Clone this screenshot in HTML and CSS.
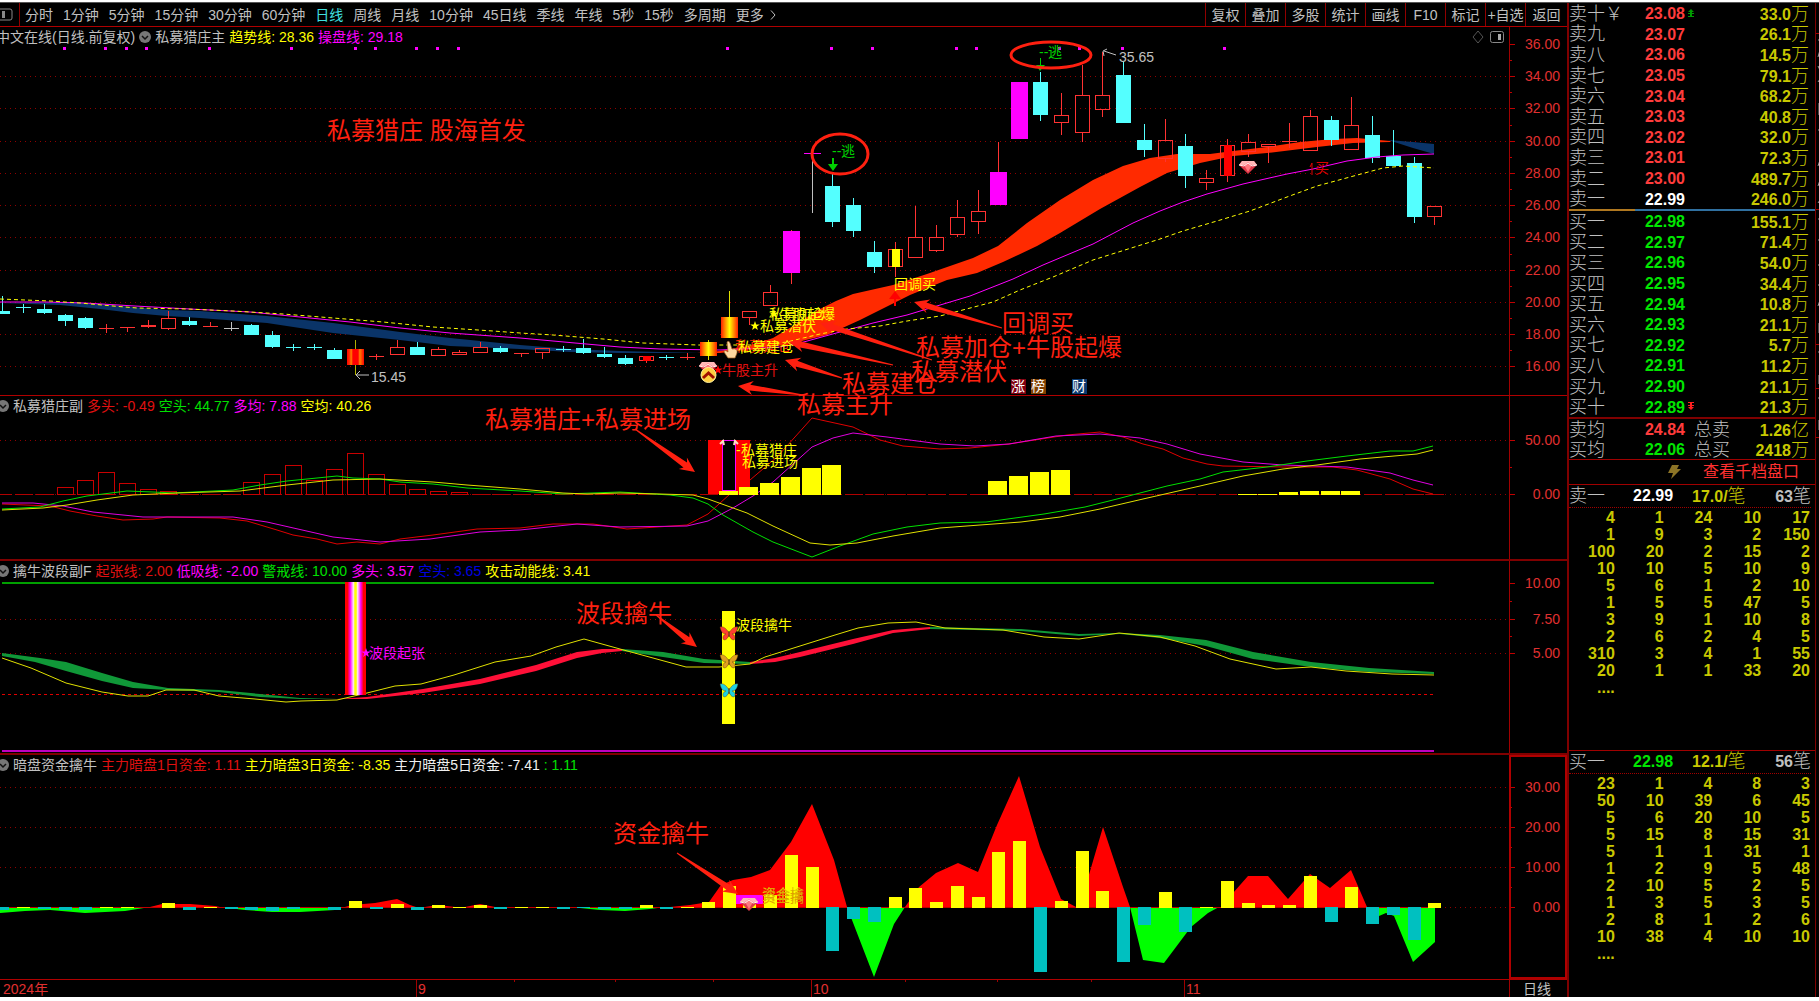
FILE: index.html
```html
<!DOCTYPE html>
<html lang="zh-CN">
<head>
<meta charset="utf-8">
<title>中文在线 日线</title>
<meta name="viewport" content="width=device-width, initial-scale=1.0">
<link rel="stylesheet" href="styles.css">
</head>
<body>

<div class="app">
<main class="left">

<nav class="toolbar">
<button class="side-toggle" aria-label="侧栏"><svg width="13" height="13" viewBox="0 0 13 13"><rect x="-3" y="1" width="15" height="11" rx="2" fill="none" stroke="#888"/><rect x="2" y="3" width="3" height="7" fill="#888"/></svg></button>
<div class="periods">
<button>分时</button>
<button>1分钟</button>
<button>5分钟</button>
<button>15分钟</button>
<button>30分钟</button>
<button>60分钟</button>
<button class="active">日线</button>
<button>周线</button>
<button>月线</button>
<button>10分钟</button>
<button>45日线</button>
<button>季线</button>
<button>年线</button>
<button>5秒</button>
<button>15秒</button>
<button>多周期</button>
<button class="more">更多<svg width="6" height="10" viewBox="0 0 6 10"><path d="M1 0.5L5 5L1 9.5" fill="none" stroke="#c0c0c0"/></svg></button>
</div>
<div class="tools">
<button>复权</button>
<button>叠加</button>
<button>多股</button>
<button>统计</button>
<button>画线</button>
<button>F10</button>
<button>标记</button>
<button>+自选</button>
<button>返回</button>
</div>
</nav>

<div class="charts">

<section class="panel panel-main">
<svg id="mainChart" class="plot" viewBox="0 27 1567 368" preserveAspectRatio="xMinYMin meet"></svg>
<div class="legend">
<span class="first">中文在线(日线.前复权)</span>
<svg class="chev" width="12" height="12" viewBox="0 0 12 12"><circle cx="6" cy="6" r="6" fill="#777"/><path d="M3 5L6 8L9 5" fill="none" stroke="#111" stroke-width="1.5"/></svg>
<span>私募猎庄主</span>
<span class="yellow">趋势线: 28.36</span>
<span class="magenta">操盘线: 29.18</span>
<svg class="corner" width="32" height="14" viewBox="0 0 32 14"><path d="M6 1L11 7L6 13L1 7Z" fill="none" stroke="#555"/><rect x="18.500" y="1.500" width="13" height="11" rx="2" fill="none" stroke="#888"/><rect x="26" y="4" width="3" height="6" fill="#aaa"/></svg>
</div>
</section>

<section class="panel panel-sub">
<svg id="subChart" class="plot" viewBox="0 396 1567 163" preserveAspectRatio="xMinYMin meet"></svg>
<div class="legend">
<svg class="chev edge" width="12" height="12" viewBox="0 0 12 12"><circle cx="6" cy="6" r="6" fill="#777"/><path d="M3 5L6 8L9 5" fill="none" stroke="#111" stroke-width="1.5"/></svg>
<span>私募猎庄副</span>
<span class="red">多头: -0.49</span>
<span class="green">空头: 44.77</span>
<span class="magenta">多均: 7.88</span>
<span class="yellow">空均: 40.26</span>
</div>
</section>

<section class="panel panel-wave">
<svg id="waveChart" class="plot" viewBox="0 561 1567 192" preserveAspectRatio="xMinYMin meet"></svg>
<div class="legend">
<svg class="chev edge" width="12" height="12" viewBox="0 0 12 12"><circle cx="6" cy="6" r="6" fill="#777"/><path d="M3 5L6 8L9 5" fill="none" stroke="#111" stroke-width="1.5"/></svg>
<span>擒牛波段副F</span>
<span class="red">起张线: 2.00</span>
<span class="magenta">低吸线: -2.00</span>
<span class="green">警戒线: 10.00</span>
<span class="magenta">多头: 3.57</span>
<span class="blue">空头: 3.65</span>
<span class="yellow">攻击动能线: 3.41</span>
</div>
</section>

<section class="panel panel-fund">
<svg id="fundChart" class="plot" viewBox="0 755 1567 224" preserveAspectRatio="xMinYMin meet"></svg>
<div class="legend">
<svg class="chev edge" width="12" height="12" viewBox="0 0 12 12"><circle cx="6" cy="6" r="6" fill="#777"/><path d="M3 5L6 8L9 5" fill="none" stroke="#111" stroke-width="1.5"/></svg>
<span>暗盘资金擒牛</span>
<span class="red">主力暗盘1日资金: 1.11</span>
<span class="yellow">主力暗盘3日资金: -8.35</span>
<span class="white">主力暗盘5日资金: -7.41</span>
<span class="green">: 1.11</span>
</div>
</section>

<svg id="timeAxis" class="time-axis" viewBox="0 980 1567 17" preserveAspectRatio="xMinYMin meet"></svg>

<svg id="notes" class="notes" viewBox="0 27 1567 970" preserveAspectRatio="xMinYMin meet"></svg>
</div>
</main>

<aside class="quote">
<table class="book">
<tr><th>卖十￥</th><td class="up">23.08<svg class="mark" width="6" height="8" viewBox="0 0 6 8"><path d="M3 0L6 3H4V4H6V5H4V7H6V8H0V7H2V5H0V4H2V3H0Z" fill="#009a00"/></svg></td><td class="vol">33.0<i>万</i></td></tr>
<tr><th>卖九</th><td class="up">23.07</td><td class="vol">26.1<i>万</i></td></tr>
<tr><th>卖八</th><td class="up">23.06</td><td class="vol">14.5<i>万</i></td></tr>
<tr><th>卖七</th><td class="up">23.05</td><td class="vol">79.1<i>万</i></td></tr>
<tr><th>卖六</th><td class="up">23.04</td><td class="vol">68.2<i>万</i></td></tr>
<tr><th>卖五</th><td class="up">23.03</td><td class="vol">40.8<i>万</i></td></tr>
<tr><th>卖四</th><td class="up">23.02</td><td class="vol">32.0<i>万</i></td></tr>
<tr><th>卖三</th><td class="up">23.01</td><td class="vol">72.3<i>万</i></td></tr>
<tr><th>卖二</th><td class="up">23.00</td><td class="vol">489.7<i>万</i></td></tr>
<tr><th>卖一</th><td class="flat">22.99</td><td class="vol">246.0<i>万</i></td></tr>
</table>
<div class="ratio"><div class="ratio-sell"></div></div>
<table class="book">
<tr><th>买一</th><td class="down">22.98</td><td class="vol">155.1<i>万</i></td></tr>
<tr><th>买二</th><td class="down">22.97</td><td class="vol">71.4<i>万</i></td></tr>
<tr><th>买三</th><td class="down">22.96</td><td class="vol">54.0<i>万</i></td></tr>
<tr><th>买四</th><td class="down">22.95</td><td class="vol">34.4<i>万</i></td></tr>
<tr><th>买五</th><td class="down">22.94</td><td class="vol">10.8<i>万</i></td></tr>
<tr><th>买六</th><td class="down">22.93</td><td class="vol">21.1<i>万</i></td></tr>
<tr><th>买七</th><td class="down">22.92</td><td class="vol">5.7<i>万</i></td></tr>
<tr><th>买八</th><td class="down">22.91</td><td class="vol">11.2<i>万</i></td></tr>
<tr><th>买九</th><td class="down">22.90</td><td class="vol">21.1<i>万</i></td></tr>
<tr><th>买十</th><td class="down">22.89<svg class="mark" width="6" height="8" viewBox="0 0 6 8"><path d="M3 8L6 5H4V4H6V3H4V1H6V0H0V1H2V3H0V4H2V5H0Z" fill="#ff2020"/></svg></td><td class="vol">21.3<i>万</i></td></tr>
</table>
<table class="book avg">
<tr><th>卖均</th><td class="up">24.84</td><th class="total">总卖</th><td class="vol">1.26<i>亿</i></td></tr>
<tr><th>买均</th><td class="down">22.06</td><th class="total">总买</th><td class="vol">2418<i>万</i></td></tr>
</table>
<a class="depth" href="#depth"><svg width="13" height="14" viewBox="0 0 13 14"><path d="M4 0H11L9 4H13L3 14L5 8H0Z" fill="#8c7426"/></svg><span>查看千档盘口</span></a>
<div class="queue queue-sell" id="depth">
<div class="queue-head"><span class="name">卖一</span><b class="flat">22.99</b><span class="per">17.0/<i>笔</i></span><span class="count">63<i>笔</i></span></div>
<table class="ticks">
<tr><td>4</td><td>1</td><td>24</td><td>10</td><td>17</td></tr>
<tr><td>1</td><td>9</td><td>3</td><td>2</td><td>150</td></tr>
<tr><td>100</td><td>20</td><td>2</td><td>15</td><td>2</td></tr>
<tr><td>10</td><td>10</td><td>5</td><td>10</td><td>9</td></tr>
<tr><td>5</td><td>6</td><td>1</td><td>2</td><td>10</td></tr>
<tr><td>1</td><td>5</td><td>5</td><td>47</td><td>5</td></tr>
<tr><td>3</td><td>9</td><td>1</td><td>10</td><td>8</td></tr>
<tr><td>2</td><td>6</td><td>2</td><td>4</td><td>5</td></tr>
<tr><td>310</td><td>3</td><td>4</td><td>1</td><td>55</td></tr>
<tr><td>20</td><td>1</td><td>1</td><td>33</td><td>20</td></tr>
<tr><td>....</td><td></td><td></td><td></td><td></td></tr>
</table>
</div>
<div class="queue queue-buy">
<div class="queue-head"><span class="name">买一</span><b class="down">22.98</b><span class="per">12.1/<i>笔</i></span><span class="count">56<i>笔</i></span></div>
<table class="ticks">
<tr><td>23</td><td>1</td><td>4</td><td>8</td><td>3</td></tr>
<tr><td>50</td><td>10</td><td>39</td><td>6</td><td>45</td></tr>
<tr><td>5</td><td>6</td><td>20</td><td>10</td><td>5</td></tr>
<tr><td>5</td><td>15</td><td>8</td><td>15</td><td>31</td></tr>
<tr><td>5</td><td>1</td><td>1</td><td>31</td><td>1</td></tr>
<tr><td>1</td><td>2</td><td>9</td><td>5</td><td>48</td></tr>
<tr><td>2</td><td>10</td><td>5</td><td>2</td><td>5</td></tr>
<tr><td>1</td><td>3</td><td>5</td><td>3</td><td>5</td></tr>
<tr><td>2</td><td>8</td><td>1</td><td>2</td><td>6</td></tr>
<tr><td>10</td><td>38</td><td>4</td><td>10</td><td>10</td></tr>
<tr><td>....</td><td></td><td></td><td></td><td></td></tr>
</table>
</div>
</aside>

<div class="edge-strip">
<svg width="4" height="994" viewBox="0 3 4 994"><path d="M0 33.500H4M0 209.500H4M0 344.500H4M0 388.500H4M0 437.500H4" stroke="#a00000"/><path d="M2 40H4M4 50L2 57M2 66L4 70M2 82L4 79M3 103V115M2 130H4M4 160L2 166M4 180L2 186M2 203L4 200M2 219H4M2 240H4M2 265H4M2 285H4M4 300L2 306M3 323V333M2 352H4M3 375V384M2 398H4M3 420V430" stroke="#999" fill="none"/></svg>
</div>
</div>

<script src="chart.js"></script>
</body>
</html>
```
FILE: styles.css
```css
*{box-sizing:border-box;}
html,body{height:100%;margin:0;}
body{
background-color:#fff;
color:#c0c0c0;
font-family:"Liberation Sans","Noto Sans CJK SC",sans-serif;
font-size:14px;
line-height:18px;
overflow:hidden;
}
button{
background:none;
border:0;
margin:0;
padding:0;
color:inherit;
font:inherit;
cursor:pointer;
white-space:nowrap;
}
i{font-style:normal;}

.app{
display:flex;
height:calc(100% - 6px);
margin:2px 0 4px;
border-top:1px solid #555;
background-color:#000;
}
.left{flex:1;min-width:0;display:flex;flex-direction:column;}

/* top toolbar */
.toolbar{
display:flex;
height:24px;
border-bottom:1px solid #b00000;
}
.side-toggle{
display:flex;
align-items:center;
width:20px;
border-right:1px solid #900000;
}
.periods{flex:1;display:flex;align-items:center;gap:10px;padding-left:5px;overflow:hidden;}
.periods .active{color:#40e0e0;}
.more{display:flex;align-items:center;gap:6px;}
.tools{display:flex;}
.tools button{width:40px;border-left:1px solid #900000;}
.tools button:last-child{width:42px;}

/* stacked chart panels */
.charts{flex:1;min-height:0;position:relative;display:flex;flex-direction:column;}
.panel{
display:grid;
grid-template:minmax(0,1fr) / minmax(0,1fr);
min-height:0;
border-bottom:1px solid #b00000;
}
.panel-main{flex:368 1 0;}
.panel-sub{flex:163 1 0;border-bottom:2px solid #800000;}
.panel-wave{flex:192 1 0;border-bottom:2px solid #800000;}
.panel-fund{flex:224 1 0;}
.plot,.legend{grid-area:1 / 1;}
.plot,.time-axis,.notes{display:block;width:100%;}
.plot{height:100%;}
.time-axis{height:17px;}
.notes{position:absolute;left:0;top:0;height:100%;pointer-events:none;}
.legend{
display:flex;
align-items:center;
align-self:start;
gap:4px;
height:20px;
white-space:nowrap;
}
.legend .first{margin-left:-4px;}
.edge{margin-left:-3px;}
.corner{margin-left:auto;margin-right:63px;}
.yellow{color:#ffff00;}
.magenta{color:#ff00ff;}
.red{color:#e01010;}
.green{color:#00e000;}
.blue{color:#0000e0;}
.white{color:#f0f0f0;}

svg text{font-size:14px;}
svg .axis{fill:#e03030;text-anchor:end;}
svg .big{font-size:24px;fill:#ff2010;}

/* order book */
.quote{
width:248px;
border-left:2px solid #800000;
display:flex;
flex-direction:column;
}
.book{
width:100%;
height:206px;
flex:none;
table-layout:fixed;
border-collapse:collapse;
font-size:16px;
}
.book th{
width:64px;
padding:1px 0 0;
text-align:left;
font-size:18px;
font-weight:300;
white-space:nowrap;
}
.book td{padding:2px 0 0;font-weight:bold;text-align:right;line-height:16px;}
.book td:nth-child(2){width:52px;position:relative;}
.book .vol{padding-right:6px;color:#c8c800;}
.vol i,.queue-head i{font-size:18px;font-weight:300;}
.mark{position:absolute;left:55px;top:6px;}
.up{color:#ff3c3c;}
.down{color:#00e600;}
.flat{color:#fff;}
.ratio{height:2px;flex:none;background-color:#3070a0;}
.ratio-sell{width:66px;height:2px;background-color:#b07820;}
.avg{height:42px;border-top:2px solid #800000;}
.book .total{width:54px;padding-left:9px;}
.depth{
display:flex;
align-items:center;
justify-content:flex-end;
gap:22px;
height:26px;
flex:none;
padding-right:16px;
border-top:1px solid #a00000;
border-bottom:1px solid #a00000;
color:#ff3030;
font-size:16px;
text-decoration:none;
}
.queue-sell{flex:266 1 0;}
.queue-buy{flex:247 1 0;border-top:1px solid #a00000;}
.queue-head{
display:flex;
align-items:center;
height:23px;
margin:0 4px 0 0;
border-bottom:1px dotted #a00000;
font-size:16px;
}
.queue-head .name{width:64px;font-size:18px;font-weight:300;}
.queue-head b{width:59px;}
.queue-head .per{color:#c8c800;font-weight:bold;}
.queue-head .count{margin-left:auto;font-weight:bold;}
.ticks{
width:244px;
table-layout:fixed;
border-collapse:collapse;
margin-top:1px;
color:#c8c800;
font-size:16px;
font-weight:bold;
line-height:17px;
}
.ticks td{padding:0 3px 0 0;height:17px;text-align:right;}

.edge-strip{flex:none;width:4px;border-left:1px solid #800000;overflow:hidden;}
```
FILE: chart.js
```js
var NS = "http://www.w3.org/2000/svg";
var RED = "#ff3232", CYAN = "#54ffff", MAG = "#ff00ff", YEL = "#ffff00";

function add(parent, tag, attrs, text) {
  var n = document.createElementNS(NS, tag);
  for (var k in attrs) n.setAttribute(k, attrs[k]);
  if (text !== undefined) n.textContent = text;
  parent.appendChild(n);
  return n;
}
// centre of the bar with index i
function bx(i) { return Math.round(2.3 + 20.754 * i); }

function rect(p, x, y, w, h, fill, stroke) {
  return add(p, "rect", {x: x, y: y, width: w, height: h, fill: fill || "none", stroke: stroke || "none", "shape-rendering": "crispEdges"});
}
function line(p, pts, color, extra) {
  var a = {points: pts, fill: "none", stroke: color, "stroke-width": 1};
  for (var k in extra) a[k] = extra[k];
  return add(p, "polyline", a);
}
function area(p, pts, color) { return add(p, "polygon", {points: pts, fill: color}); }
function label(p, x, yMid, s, color, cls) {
  return add(p, "text", {x: x, y: yMid + (cls == "big" ? 9 : 5), fill: color || "", "class": cls || ""}, s);
}
function star(p, x, y, color) {
  var s = "";
  for (var i = 0; i < 10; i++) {
    var r = i % 2 ? 2 : 5, a = Math.PI * (i / 5 - 0.5);
    s += (x + r * Math.cos(a)).toFixed(1) + "," + (y + r * Math.sin(a)).toFixed(1) + " ";
  }
  area(p, s, color);
}
function gem(p, x, y) {
  var g = add(p, "g", {transform: "translate(" + x + " " + y + ")"});
  area(g, "-6,-6 6,-6 9,-2 0,7 -9,-2", "#e03848");
  area(g, "-6,-6 6,-6 9,-2 -9,-2", "#ffb8b8");
  area(g, "-4,-2 0,-5 4,-2 0,5", "#ff7880");
  line(g, "-9,-2 -4,-1 0,-4 4,-1 9,-2", "#fff0f0");
}
function butterfly(p, x, y, c) {
  var g = add(p, "g", {transform: "translate(" + x + " " + y + ")", fill: c, stroke: "#503010", "stroke-width": 0.4});
  add(g, "path", {d: "M0 0C-3 -5 -6 -7 -9 -6C-8 -1 -6 1 -3 1C-6 2 -7 5 -5 7C-2 7 -1 4 0 2C1 4 2 7 5 7C7 5 6 2 3 1C6 1 8 -1 9 -6C6 -7 3 -5 0 0Z"});
  line(g, "0,-2 0,4", "#503010");
}

// axis: line, dotted grid rows, ticks and labels
function axis(p, top, bottom, rows, noGrid) {
  line(p, "1509.5," + top + " 1509.5," + bottom, "#a00000");
  for (var i = 0; i < rows.length; i++) {
    var y = rows[i][0] + 0.5;
    if (!(noGrid && i == 0))
      line(p, "0," + y + " 1507," + y, "#900000", {"stroke-dasharray": "1 4"});
    line(p, "1510," + y + " 1515," + y, "#c00000");
    if (i > 0) {
      var m = Math.round((rows[i][0] + rows[i - 1][0]) / 2) + 0.5;
      line(p, "1510," + m + " 1512," + m, "#c00000");
    }
    label(p, 1560, rows[i][0], rows[i][1], null, "axis");
  }
}

/* ---- main chart ---- */
var m = document.getElementById("mainChart");
var defs = add(m, "defs", {});
function gradient(id, stops) {
  var g = add(defs, "linearGradient", {id: id});
  for (var i = 0; i < stops.length; i++) add(g, "stop", {offset: stops[i][0], "stop-color": stops[i][1]});
}
gradient("hot", [[0, "#ff0000"], [0.15, "#ff3000"], [0.25, "#ff8000"], [0.35, "#ff0000"], [0.65, "#ff0000"], [0.75, "#ff8000"], [1, "#ff0000"]]);
gradient("gold", [[0, "#ff2000"], [0.5, "#ffff00"], [1, "#ff2000"]]);
gradient("rise", [[0, "#ff0000"], [0.12, "#ff0000"], [0.25, "#ff00ff"], [0.4, "#ffe0ff"], [0.47, "#ffff00"], [0.53, "#ffff00"], [0.6, "#ffe0ff"], [0.75, "#ff00ff"], [0.88, "#ff0000"], [1, "#ff0000"]]);

axis(m, 27, 396, [[44, "36.00"], [76, "34.00"], [108, "32.00"], [141, "30.00"], [173, "28.00"], [205, "26.00"], [237, "24.00"], [270, "22.00"], [302, "20.00"], [334, "18.00"], [366, "16.00"]], true);

area(m, "0,303 70,302 100,304 133,307 167,310 200,311 267,316 333,323 400,332 450,338 520,345 570,349 620,351 700,353 620,353 570,352 520,349 450,346 400,340 333,333 267,323 200,318 167,316 133,313 100,309 60,305", "#0a3468");
area(m, "697,353 720,351 753,345 773,338 793,326 820,309 836,301 853,294 893,285 927,274 973,258 998,246 1027,223 1060,200 1093,180 1123,166 1150,158 1177,154 1210,154 1233,151 1267,147 1300,142 1333,139 1357,138 1390,141 1390,142 1353,143 1317,147 1267,153 1233,156 1200,163 1167,173 1140,187 1100,209 1060,233 1037,246 1003,262 977,273 947,280 910,295 860,320 827,335 793,343 760,348 720,353", "#ff2a00");
area(m, "1388,140 1413,142 1434,144 1434,154 1413,148", "#0a3468");

// kind, high, top, bottom, low
var candles = [
  ["c",296,311,314,314],["c",304,307,308,313],["c",304,309,313,314],["c",314,315,321,326],["c",317,318,328,329],
  ["r",324,328,329,333],["r",327,327,328,332],["r",320,325,327,328],["r",311,318,329,330],["c",317,321,325,326],
  ["r",322,326,327,327],["w",322,328,329,331],["c",324,325,335,335],["c",331,335,347,348],["c",344,347,348,351],
  ["c",344,347,348,350],["c",348,350,359,359],["h",340,349,365,375],["r",354,356,357,360],["r",340,347,355,355],
  ["c",342,347,355,355],["r",347,349,356,356],["r",350,352,355,355],["r",342,347,353,353],["c",346,348,352,353],
  ["r",353,353,354,357],["r",348,348,353,359],["c",346,349,350,352],["c",339,348,353,354],["c",347,354,357,358],
  ["c",355,358,364,365],["R",356,356,361,363],["c",355,357,358,360],["r",353,357,358,360],["g",340,342,356,360],
  ["g",291,317,338,338],["r",311,311,318,325],["r",285,292,306,306],["m",230,231,273,284],["x",157,157,157,213],
  ["c",174,186,222,227],["c",198,205,231,237],["c",241,252,267,273],["y",242,249,267,277],["r",206,237,258,258],
  ["r",225,237,251,252],["r",200,217,235,237],["r",190,211,222,234],["m",142,172,205,205],["m",82,82,139,139],
  ["c",72,82,115,121],["r",93,115,123,135],["r",65,95,133,142],["r",52,95,110,117],["c",62,75,123,123],
  ["c",124,140,150,157],["r",119,140,159,162],["c",134,146,176,188],["r",170,178,183,190],["R",139,145,176,182],
  ["r",134,142,152,157],["r",144,144,147,163],["r",123,141,142,148],["r",110,116,151,151],["c",116,120,140,146],
  ["r",97,125,150,150],["c",116,135,158,163],["c",130,156,166,166],["c",157,163,217,223],["r",206,206,217,225]
];
// averages lie above plain candles and below the highlighted ones
var plain = add(m, "g", {}), averages = add(m, "g", {}), marked = add(m, "g", {});
for (var i = 0; i < candles.length; i++) {
  var k = candles[i], x = bx(i), kind = k[0], h = Math.max(1, k[3] - k[2]);
  var wick = {c: CYAN, r: RED, R: RED, y: RED, w: "#c0c0c0", h: "#b0b000", g: "#e0e000", m: RED, x: "#c0c0c0"}[kind];
  var p = kind == "g" || kind == "h" ? marked : plain;
  if (kind == "x") { rect(p, x, k[1], 1, k[4] - k[1], wick); continue; }
  if (k[2] > k[1]) rect(p, x, k[1], 1, k[2] - k[1], wick);
  if (k[4] > k[3]) rect(p, x, k[3], 1, k[4] - k[3], wick);
  if (kind == "c" || kind == "w") rect(p, x - 7, k[2], 15, h, wick);
  else if (kind == "m") rect(p, x - 8, k[2], 17, h, MAG);
  else if (kind == "h") rect(p, x - 8, k[2], 17, h, "url(#hot)");
  else if (kind == "g") rect(p, x - 8, k[2], 17, h, "url(#gold)");
  else if (h < 3) rect(p, x - 7, k[2], 15, h, RED);
  else {
    rect(p, x - 6.5, k[2] + 0.5, 14, h - 1, "none", RED);
    if (kind == "R") rect(p, x - 3, k[2], 8, h, "#ff0000");
    if (kind == "y") rect(p, x - 3, k[2], 8, h, YEL);
  }
}
rect(m, 804, 153, 17, 1, MAG);

line(averages, "0,302 45,302 85,303 135,306 190,309 250,312 300,317 350,322 400,328 450,333 520,338 575,343 620,347 660,349 720,350 780,347 800,343 840,332 873,323 907,315 970,296 1013,279 1043,265 1093,244 1133,223 1160,211 1183,202 1207,194 1243,184 1287,174 1313,169 1347,161 1377,157 1403,155 1434,154", MAG);
line(averages, "0,299 50,301 80,303 113,306 137,308 187,309 233,311 283,314 333,318 383,322 433,327 493,331 520,333 553,335 603,339 643,343 697,345 753,345 787,342 820,334 847,329 880,326 907,321 940,316 993,302 1020,290 1053,277 1093,260 1160,239 1183,231 1217,221 1250,211 1287,197 1317,186 1350,177 1383,168 1403,166 1434,168", YEL, {"stroke-dasharray": "4 3"});

var dots = [64,105,126,146,209,291,355,375,416,437,458,727,831,872,956,976,1059,1079,1122,1224];
for (i = 0; i < dots.length; i++) rect(m, dots[i] - 1, 47, 3, 3, MAG);

// price tags
line(m, "369,375 356,375", "#c0c0c0"); line(m, "360,371 356,375 360,379", "#c0c0c0");
label(m, 371, 377, "15.45", "#c0c0c0");
line(m, "1116,55 1104,51", "#c0c0c0"); line(m, "1107,49 1103,51 1104,56", "#c0c0c0");
label(m, 1119, 57, "35.65", "#c0c0c0");

// signals
label(m, 832, 151, "--", "#00d000"); label(m, 841, 151, "逃", "#00d000");
label(m, 1039, 52, "--", "#00d000"); label(m, 1048, 52, "逃", "#00d000");
area(m, "832,158 834,158 834,164 838,164 833,171 828,164 832,164", "#00d000");
area(m, "1040,58 1041,58 1041,65 1045,65 1040,71 1036,65 1040,65", "#00d000");
label(m, 894, 284, "回调买", YEL);
area(m, "895,291 901,299 896,299 896,306 894,306 894,299 889,299", "#ff0000");
star(m, 774, 314, YEL);
label(m, 769, 314, "私募加仓", YEL); label(m, 779, 314, "牛股起爆", YEL);
star(m, 755, 326, YEL); label(m, 760, 326, "私募潜伏", YEL);
label(m, 735, 346, "私募建仓", "#ff2a00"); label(m, 738, 347, "私募建仓", YEL);
star(m, 718, 370, "#ff0000"); label(m, 722, 370, "牛股主升", "#e01010");
gem(m, 1248, 167);
line(m, "1312,175 1312,163 1310,167", "#e00000"); label(m, 1315, 168, "买", "#e00000");
// hand pointer
add(m, "path", {d: "M727 342Q729 340 730 343L732 349Q738 348 737 353L735 358H728L724 352Q724 349 728 352Z", fill: "#ffd8a0", stroke: "#a06020", "stroke-width": 0.7});
// gem and coin
gem(m, 708, 368);
add(m, "circle", {cx: 708.5, cy: 375, r: 7.5, fill: "#ffd040", stroke: "#fff0a0"});
line(m, "703,378 708.5,373 714,378", "#a01000", {"stroke-width": 3});

// news badges
var badges = [[1011, "涨", "#800010"], [1031, "榜", "#804000"], [1072, "财", "#0a3a70"]];
for (i = 0; i < badges.length; i++) {
  rect(m, badges[i][0], 379, 15, 15, badges[i][2]);
  label(m, badges[i][0], 386, badges[i][1], "#fff");
}

/* ---- second panel ---- */
var s = document.getElementById("subChart");
axis(s, 396, 560, [[440, "50.00"], [494, "0.00"]]);
for (i = 0; i < 70; i++) rect(s, bx(i) - 8, 494, 18, 1, "#b00000");
var hollow = {3:487,4:480,5:472,6:483,7:489,8:491,12:482,13:474,14:465,15:480,16:469,17:453,18:474,19:484,20:489,21:491,22:492};
for (k in hollow) rect(s, bx(k) - 7.5, hollow[k] + 0.5, 16, 494 - hollow[k], "none", "#c80000");

line(s, "2,504 50,506 70,511 97,516 123,520 153,519 167,517 220,518 247,521 277,530 293,535 317,539 337,544 357,542 380,544 400,539 433,535 477,529 520,528 553,524 593,524 627,529 687,525 708,514 730,494 750,480 777,457 812,418 853,427 880,440 903,446 940,449 970,448 1009,444 1067,435 1100,432 1123,437 1143,444 1163,449 1183,458 1207,464 1223,466 1283,467 1333,467 1357,470 1390,479 1413,489 1433,494", "#e00000");
line(s, "2,503 33,503 63,506 93,512 143,517 233,517 267,522 333,537 380,542 430,539 480,532 520,530 577,524 620,527 687,526 708,521 733,508 753,496 773,482 812,447 833,438 853,433 887,437 940,444 975,446 1009,444 1056,436 1100,434 1140,438 1167,444 1200,454 1243,462 1283,465 1347,467 1390,473 1413,480 1433,485", "#e000e0");
line(s, "2,509 40,507 63,501 87,496 127,491 153,492 173,493 233,490 260,485 287,481 337,476 353,478 380,479 400,482 433,484 467,488 520,491 563,494 620,492 670,495 693,498 708,504 723,515 753,532 773,542 812,557 840,546 873,534 907,527 940,523 986,522 1044,514 1085,507 1117,499 1140,493 1167,486 1200,479 1223,472 1267,467 1307,461 1347,456 1390,451 1413,451 1433,446", "#00e000");
line(s, "2,510 43,508 67,505 97,500 133,495 177,493 240,491 287,485 333,480 380,479 433,482 467,485 520,489 563,493 587,494 620,493 660,494 693,495 708,499 747,513 773,526 810,543 830,545 857,543 893,536 940,528 980,525 1021,522 1060,517 1100,509 1143,499 1200,486 1243,476 1283,469 1317,465 1360,459 1417,454 1433,450", "#e0e000");

rect(s, 708, 440, 42, 54, "#ff0000");
rect(s, 722, 440, 14, 50, "#000");
rect(s, 722.5, 440.5, 13, 50, "none", MAG);
line(s, "720,444 723,441 724,445", "#ffe0c0", {"stroke-width": 2}); line(s, "738,444 735,441 734,445", "#ffe0c0", {"stroke-width": 2});
var vols = {35:491,36:487,37:483,38:477,39:468,40:465,48:481,49:476,50:472,51:470,60:494,61:494,62:492,63:491,64:491,65:491};
for (k in vols) rect(s, bx(k) - 10, vols[k], 19, 495 - vols[k], YEL);
label(s, 736, 450, "-", YEL); label(s, 741, 450, "私募猎庄", YEL);
label(s, 742, 462, "私募进场", YEL);

/* ---- wave panel ---- */
var w = document.getElementById("waveChart");
axis(w, 561, 755, [[583, "10.00"], [619, "7.50"], [653, "5.00"]], true);
rect(w, 2, 582, 1432, 2, "#00a000");
rect(w, 2, 750, 1432, 2, "#c000c0");
line(w, "2,694.5 1434,694.5", "#e00000", {"stroke-dasharray": "3 3"});
area(w, "2,653 40,658 66,662 102,673 133,682 168,688 219,690 260,694 300,698 337,699 300,699 260,697 219,692 168,690 133,688 102,681 66,671 35,662 2,656", "#109838");
area(w, "337,699 367,697 423,689 480,679 536,665 577,652 602,649 622,649 622,651 602,653 577,658 536,671 480,684 423,693 367,699", "#ff1038");
area(w, "622,649 663,652 704,659 750,662 750,664 704,663 663,657 622,651", "#109838");
area(w, "750,662 775,658 800,652 853,639 893,630 930,627 930,629 893,633 853,644 800,657 775,662 750,664", "#ff1038");
area(w, "930,627 1021,629 1079,634 1120,633 1160,635 1206,640 1253,652 1311,662 1369,668 1434,672 1434,674 1369,672 1311,667 1253,659 1206,646 1160,638 1120,634 1079,636 1021,631 930,629", "#109838");
line(w, "2,658 31,668 66,683 102,692 128,696 148,696 166,690 194,690 219,696 255,699 286,702 301,701 337,700 367,693 395,686 421,684 454,675 495,662 531,656 556,647 584,639 620,649 686,667 719,667 750,664 765,657 800,646 835,635 858,628 888,623 916,622 945,628 1003,630 1044,637 1079,639 1119,633 1160,637 1195,646 1230,659 1276,669 1311,667 1346,671 1392,674 1434,675", "#e0e000");
rect(w, 345, 582, 21, 113, "url(#rise)");
star(w, 366, 653, MAG); label(w, 369, 653, "波段起张", MAG);
rect(w, 722, 611, 13, 113, YEL);
butterfly(w, 729, 633, "#ff4030");
butterfly(w, 729, 661, "#e0a020");
butterfly(w, 729, 690, "#20d0e0");
label(w, 736, 625, "波段擒牛", YEL);

/* ---- fund panel ---- */
var f = document.getElementById("fundChart");
axis(f, 755, 980, [[787, "30.00"], [827, "20.00"], [867, "10.00"], [907, "0.00"]]);
rect(f, 1510, 756, 56, 222, "none", "#b00000").setAttribute("stroke-width", 2);
area(f, "150,907 162,904 190,904 215,906 220,907", "#ff0000");
area(f, "345,907 352,905 375,903 397,899 410,905 416,907", "#ff0000");
area(f, "425,907 438,905 455,907", "#ff0000");
area(f, "465,907 480,904 495,907", "#ff0000");
area(f, "670,907 690,905 709,902 721,885 733,880 751,877 770,870 791,842 812,804 834,860 847,907", "#ff0000");
area(f, "905,907 919,887 936,873 958,863 978,872 997,825 1019,776 1040,847 1061,899 1076,907", "#ff0000");
area(f, "1081,907 1088,878 1103,827 1123,887 1130,907", "#ff0000");
area(f, "1227,907 1233,893 1248,876 1268,876 1288,899 1310,874 1330,888 1351,870 1367,907", "#ff0000");
area(f, "0,907 0,913 25,911 50,910 85,913 125,911 150,907", "#00ff00");
area(f, "220,907 245,910 272,912 300,912 335,910 343,907", "#00ff00");
area(f, "570,907 600,910 625,911 650,909 665,907", "#00ff00");
area(f, "847,907 852,920 874,977 894,924 905,907", "#00ff00");
area(f, "1130,907 1143,960 1164,963 1191,927 1208,913 1219,907", "#00ff00");
area(f, "1367,907 1379,916 1386,913 1394,916 1413,962 1435,942 1435,907", "#00ff00");
line(f, "0,907.5 1434,907.5", "#c00000");
var up = {1:907,5:907,6:907,8:903,10:907,17:901,19:904,21:905,22:907,23:905,25:907,26:907,31:905,33:907,34:902,35:886,36:895,37:895,38:855,39:867,43:897,44:888,45:902,46:886,47:897,48:852,49:841,51:901,52:851,53:891,56:892,58:907,59:881,60:903,61:905,62:905,63:876,65:887,69:903};
for (k in up) rect(f, bx(k) - 6, up[k], 13, 908 - up[k], YEL);
var down = {0:910,2:909,3:910,4:910,9:910,11:909,12:910,13:911,14:909,16:910,18:909,20:910,24:909,27:909,28:908,29:909,30:909,32:909,40:951,41:919,42:922,50:972,54:962,55:925,57:932,64:922,66:924,67:915,68:940};
for (k in down) rect(f, bx(k) - 6, 907, 13, down[k] - 907, "#00c0c0");
rect(f, 736, 895, 27, 9, MAG);
label(f, 762, 894, "资金擒", "#e0c000"); label(f, 762, 897, "资金擒", "#e0a000");
gem(f, 749, 904);

/* ---- time axis ---- */
var t = document.getElementById("timeAxis");
line(t, "1509.5,980 1509.5,997", "#a00000");
[[416, "9"], [811, "10"], [1184, "11"]].forEach(function (d) {
  line(t, d[0] + ".5,980 " + d[0] + ".5,997", "#a00000");
  label(t, d[0] + 2, 989, d[1], "#e03030");
});
[514, 615, 713, 905, 997, 1091].forEach(function (v) { line(t, v + ".5,980 " + v + ".5,982", "#a00000"); });
label(t, 3, 989, "2024年", "#e03030");
label(t, 1523, 989, "日线", "#c0c0c0");

/* ---- hand drawn notes over the panels ---- */
var n = document.getElementById("notes");
function arrow(x1, y1, x2, y2) {
  var len = Math.sqrt((x2 - x1) * (x2 - x1) + (y2 - y1) * (y2 - y1));
  var deg = Math.atan2(y2 - y1, x2 - x1) * 180 / Math.PI;
  add(n, "polygon", {
    points: "0,-0.5 " + (len - 12) + ",-3 " + (len - 15) + ",-7 " + len + ",0 " + (len - 15) + ",7 " + (len - 12) + ",3 0,0.5",
    fill: "#ff2010", transform: "translate(" + x1 + " " + y1 + ") rotate(" + deg.toFixed(1) + ")"
  });
}
arrow(1002, 328, 914, 302);
arrow(932, 360, 820, 323);
arrow(893, 365, 789, 342);
arrow(842, 378, 785, 360);
arrow(803, 395, 738, 386);
arrow(635, 429, 695, 472);
arrow(656, 615, 697, 647);
arrow(677, 853, 738, 894);
[[327, 130, "私募猎庄 股海首发"], [1002, 323, "回调买"], [916, 347, "私募加仓+牛股起爆"], [911, 371, "私募潜伏"], [842, 383, "私募建仓"], [797, 404, "私募主升"], [485, 419, "私募猎庄+私募进场"], [576, 613, "波段擒牛"], [613, 833, "资金擒牛"]].forEach(function (d) {
  label(n, d[0], d[1], d[2], null, "big");
});
add(n, "ellipse", {cx: 840, cy: 154, rx: 28, ry: 20, fill: "none", stroke: "#ff2010", "stroke-width": 3});
add(n, "ellipse", {cx: 1051, cy: 55, rx: 40, ry: 13, fill: "none", stroke: "#ff2010", "stroke-width": 3});
```
